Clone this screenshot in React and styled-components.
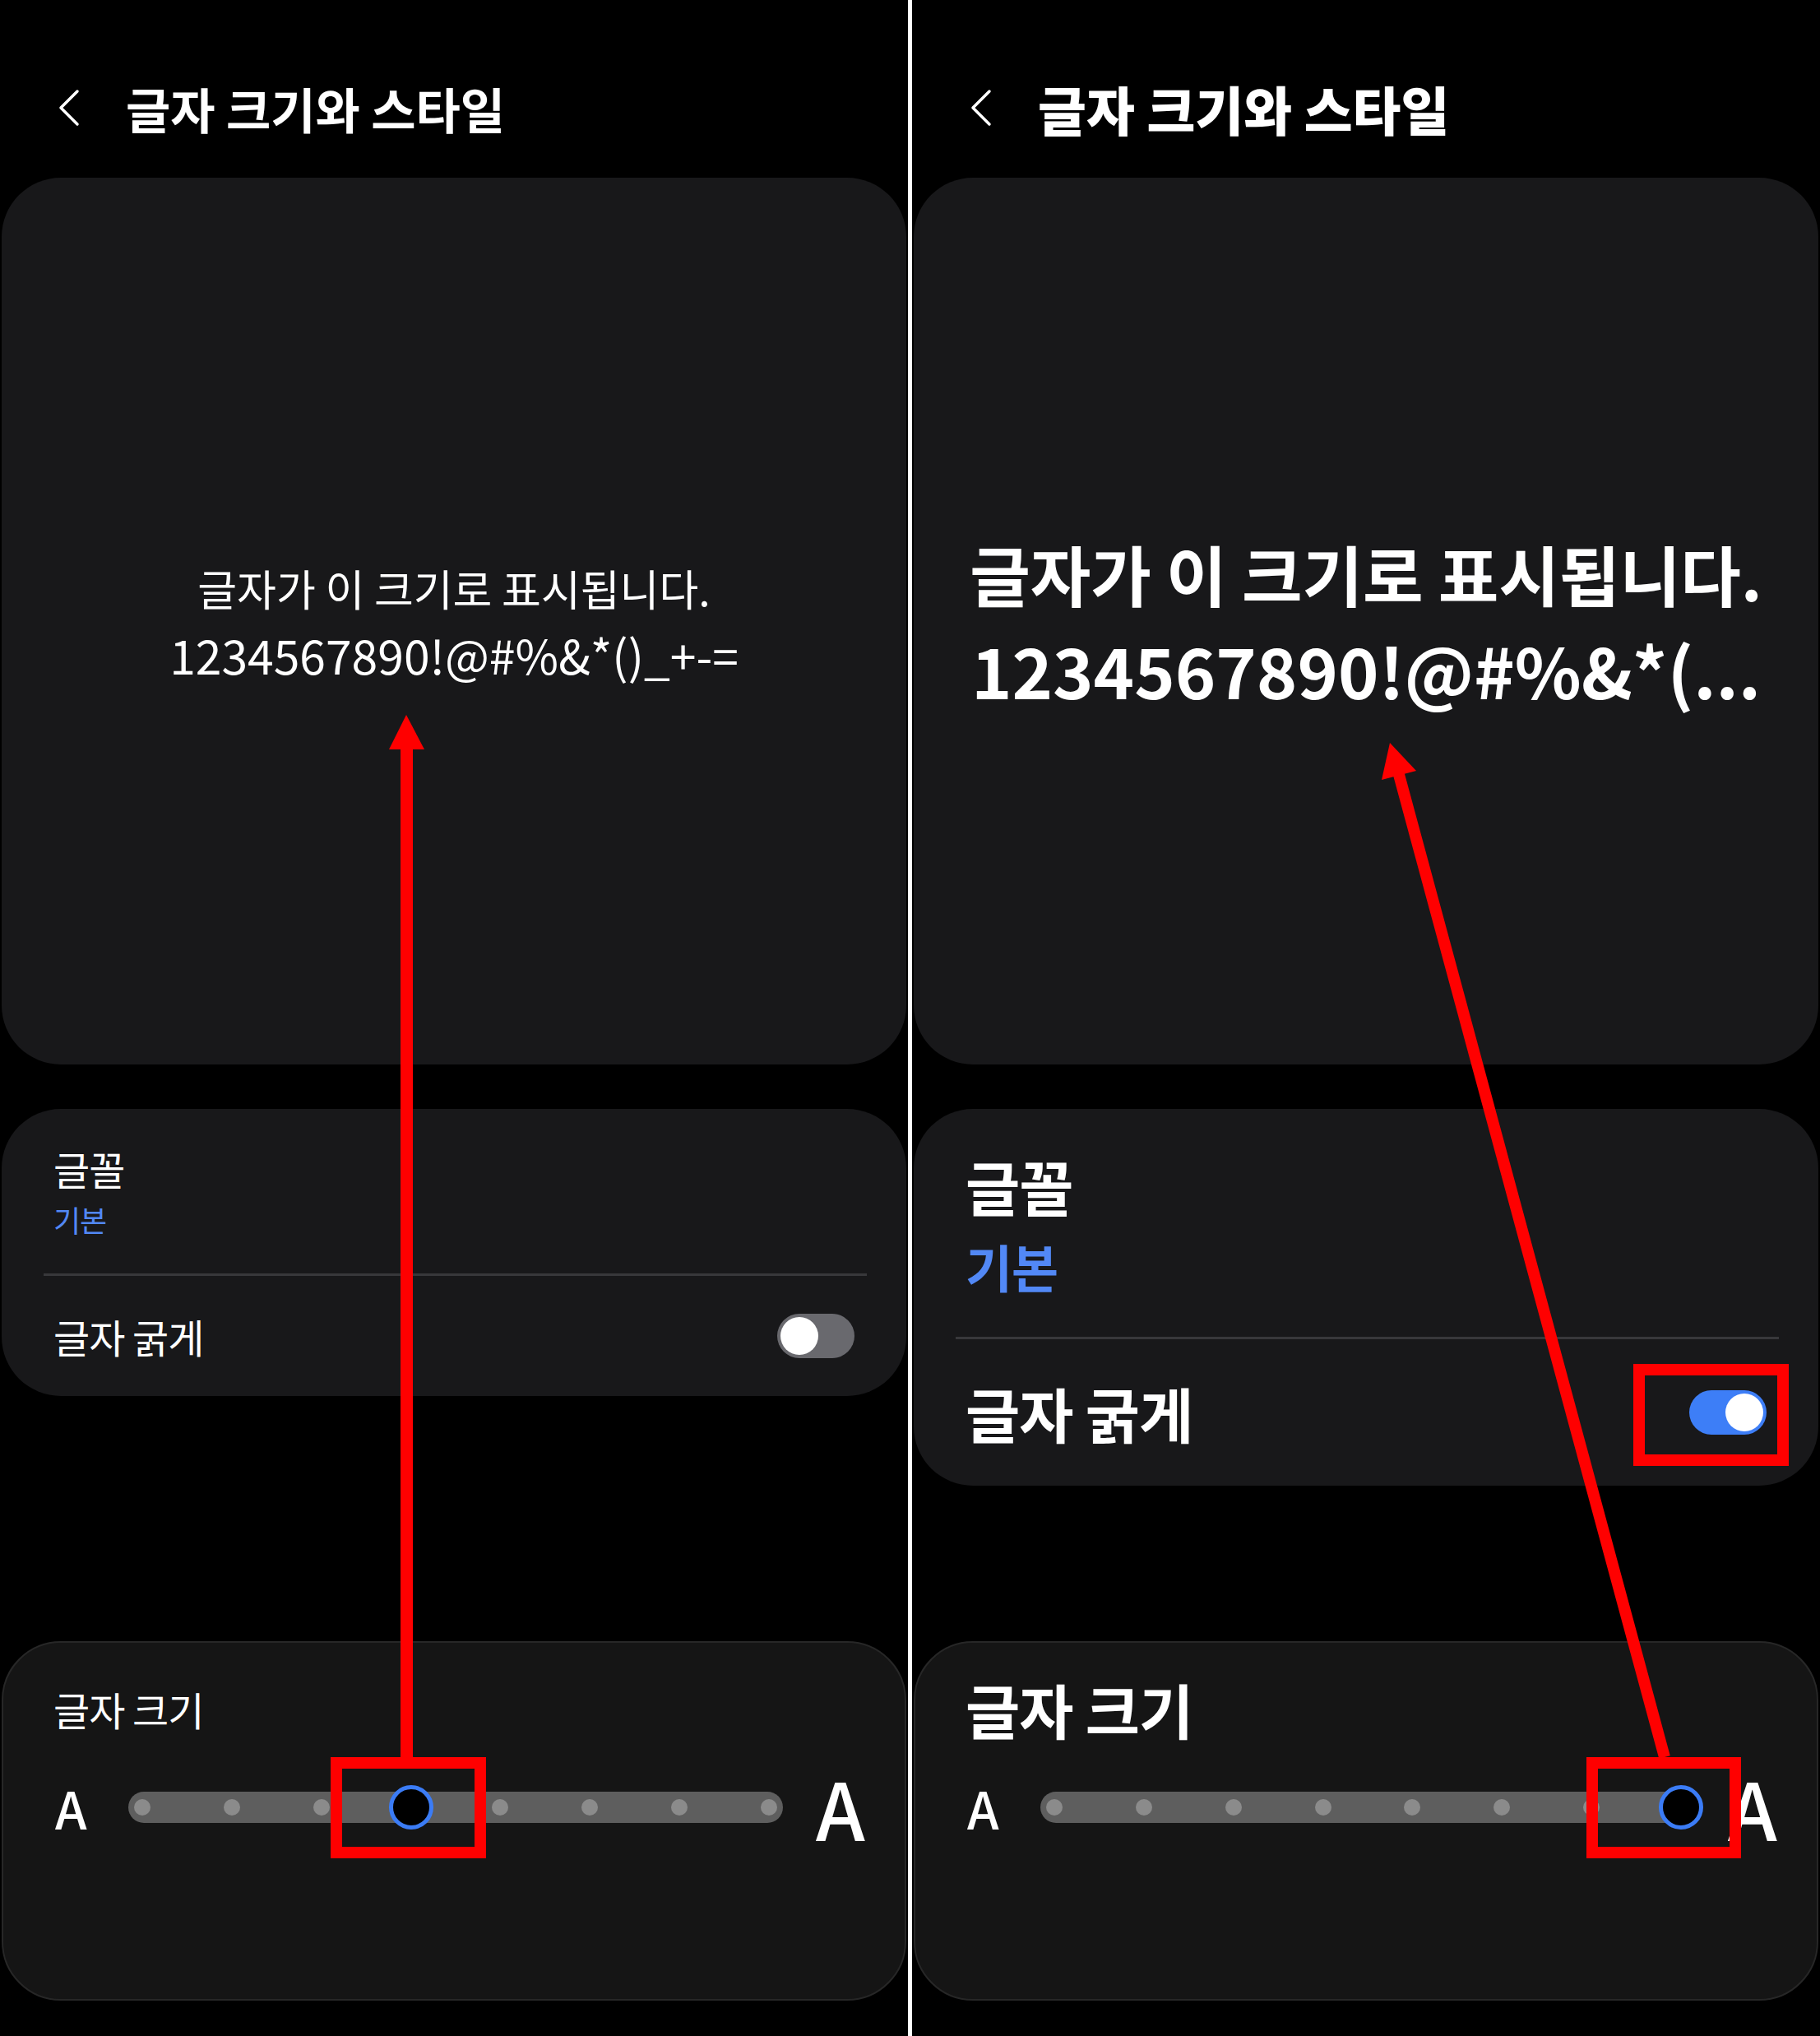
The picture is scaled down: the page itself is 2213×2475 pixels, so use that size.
import React from 'react';
import styled, { createGlobalStyle } from 'styled-components';

const GlobalStyle = createGlobalStyle`
  html, body {
    margin: 0;
    padding: 0;
    background: #000;
  }
  body {
    font-family: "Noto Sans CJK KR", "Noto Sans", sans-serif;
    color: #fff;
  }
`;

const normal = {
  titleSize: 59,
  titleWeight: 700,
  weight: 400,
  line1: 52,
  line2: 57,
  lineHeight: 80,
  spacing: 0,
  label: 48,
  labelLH: 62,
  sub: 36,
  subLH: 52,
  subGap: 5,
  topRow: 200,
  bottomRow: 146,
  on: false,
  step: 3,
  sample: '1234567890!@#%&*()_+-=',
};

const large = {
  titleSize: 64,
  titleWeight: 900,
  weight: 700,
  line1: 80,
  line2: 84,
  lineHeight: 118,
  spacing: 0,
  label: 72,
  labelLH: 90,
  sub: 62,
  subLH: 76,
  subGap: 15,
  topRow: 277,
  bottomRow: 178,
  on: true,
  step: 7,
  sample: '1234567890!@#%&*(...',
};

const Screen = styled.div`
  position: relative;
  display: flex;
  width: 2213px;
  height: 2475px;
  background: #000;
  overflow: hidden;
`;

const Split = styled.div`
  flex: none;
  width: 5px;
  background: #fff;
`;

const Panel = styled.div`
  flex: none;
  width: 1104px;
  display: flex;
  flex-direction: column;
  padding: 0 2px 43px;
  box-sizing: border-box;
`;

const Header = styled.header`
  height: 216px;
  display: flex;
  align-items: center;
  gap: 54px;
  padding: 46px 0 0 67px;
  box-sizing: border-box;
`;

const Title = styled.h1`
  margin: 0;
  font-size: ${p => p.$size}px;
  font-weight: ${p => p.$weight};
  line-height: 1;
`;

const Card = styled.section`
  background: #18181a;
  border-radius: 72px;
`;

const Preview = styled(Card)`
  height: 1078px;
  display: flex;
  flex-direction: column;
  align-items: center;
  justify-content: center;
  padding: 0 40px;
  box-sizing: border-box;
`;

const PreviewLine = styled.div`
  max-width: 100%;
  font-size: ${p => p.$size}px;
  line-height: ${p => p.$lh}px;
  font-weight: ${p => p.$weight};
  letter-spacing: ${p => p.$spacing}px;
  white-space: nowrap;
`;

const Options = styled(Card)`
  margin-top: 54px;
  display: flex;
  flex-direction: column;
`;

const OptionRow = styled.div`
  height: ${p => p.$height}px;
  display: flex;
  align-items: center;
  justify-content: space-between;
  padding: 0 63px 0 63px;
`;

const OptionText = styled.div`
  display: flex;
  flex-direction: column;
  gap: ${p => p.$gap}px;
`;

const Label = styled.div`
  font-size: ${p => p.$size}px;
  line-height: ${p => p.$lh}px;
  font-weight: ${p => p.$weight};
  letter-spacing: -1px;
`;

const SubLabel = styled(Label)`
  color: #5288f5;
`;

const Rule = styled.div`
  height: 3px;
  margin: 0 48px 0 51px;
  background: #38383b;
`;

const Toggle = styled.div`
  width: 94px;
  height: 54px;
  border-radius: 27px;
  padding: 4px;
  box-sizing: border-box;
  display: flex;
  align-items: center;
  justify-content: ${p => (p.$on ? 'flex-end' : 'flex-start')};
  background: ${p => (p.$on ? '#3d7ef7' : '#69696e')};
`;

const Knob = styled.div`
  width: 46px;
  height: 46px;
  border-radius: 50%;
  background: #fff;
`;

const SizeCard = styled(Card)`
  margin-top: auto;
  height: 437px;
  background: #151515;
  border: 2px solid #272727;
  padding-top: 35px;
  box-sizing: border-box;
`;

const SizeHead = styled.div`
  height: 90px;
  display: flex;
  align-items: center;
  padding-left: 61px;
`;

const SliderRow = styled.div`
  margin-top: 30px;
  height: 90px;
  display: flex;
  align-items: center;
  padding: 0 48px 0 63px;
`;

const Glyph = styled.span`
  flex: none;
  width: ${p => p.$w}px;
  font-size: ${p => p.$size}px;
  font-weight: 500;
  line-height: 1;
`;

const Track = styled.div`
  flex: 1;
  height: 38px;
  margin: 0 40px 0 49px;
  padding: 0 7px;
  border-radius: 19px;
  background: #5e5e5e;
  display: flex;
  align-items: center;
  justify-content: space-between;
`;

const Stop = styled.div`
  position: relative;
  flex: none;
  width: 20px;
  height: 20px;
  border-radius: 50%;
  background: ${p => (p.$hidden ? 'transparent' : '#8b8b8b')};
`;

const Thumb = styled.div`
  position: absolute;
  left: 50%;
  top: 50%;
  width: 54px;
  height: 54px;
  transform: translate(-50%, -50%);
  border: 5px solid #3b7cf6;
  border-radius: 50%;
  background: #000;
  box-sizing: border-box;
`;

const Marks = styled.svg`
  position: absolute;
  left: 0;
  top: 0;
  pointer-events: none;
`;

const Chevron = () => (
  <svg width="30" height="46" viewBox="0 0 30 46">
    <path d="M25 3 L5 23 L25 43" fill="none" stroke="#fff" strokeWidth="3.5" strokeLinecap="round" strokeLinejoin="round" />
  </svg>
);

const Phone = ({ c }) => (
  <Panel>
    <Header>
      <Chevron />
      <Title $size={c.titleSize} $weight={c.titleWeight}>글자 크기와 스타일</Title>
    </Header>

    <Preview>
      <PreviewLine $size={c.line1} $lh={c.lineHeight} $weight={c.weight} $spacing={c.spacing}>
        글자가 이 크기로 표시됩니다.
      </PreviewLine>
      <PreviewLine $size={c.line2} $lh={c.lineHeight} $weight={c.weight} $spacing={0}>
        {c.sample}
      </PreviewLine>
    </Preview>

    <Options>
      <OptionRow $height={c.topRow}>
        <OptionText $gap={c.subGap}>
          <Label $size={c.label} $lh={c.labelLH} $weight={c.weight}>글꼴</Label>
          <SubLabel $size={c.sub} $lh={c.subLH} $weight={c.weight}>기본</SubLabel>
        </OptionText>
      </OptionRow>
      <Rule />
      <OptionRow $height={c.bottomRow}>
        <Label $size={c.label} $lh={c.labelLH} $weight={c.weight}>글자 굵게</Label>
        <Toggle $on={c.on}>
          <Knob />
        </Toggle>
      </OptionRow>
    </Options>

    <SizeCard>
      <SizeHead>
        <Label $size={c.label} $lh={c.labelLH} $weight={c.weight}>글자 크기</Label>
      </SizeHead>
      <SliderRow>
        <Glyph $w={40} $size={62}>A</Glyph>
        <Track>
          {Array.from({ length: 8 }, (_, i) => (
            <Stop key={i} $hidden={i === c.step}>
              {i === c.step && <Thumb />}
            </Stop>
          ))}
        </Track>
        <Glyph $w={60} $size={96}>A</Glyph>
      </SliderRow>
    </SizeCard>
  </Panel>
);

const Annotations = () => (
  <Marks width="2213" height="2475" viewBox="0 0 2213 2475">
    <g fill="none" stroke="#ff0000" strokeWidth="14">
      <rect x="409" y="2143" width="175" height="109" />
      <rect x="1936" y="2143" width="174" height="109" />
      <rect x="1993" y="1665" width="175" height="110" />
    </g>
    <line x1="494.5" y1="905" x2="494.5" y2="2137" stroke="#ff0000" strokeWidth="15" />
    <polygon points="494,869 473,911 516,911" fill="#ff0000" />
    <line x1="1700" y1="938" x2="2024" y2="2136" stroke="#ff0000" strokeWidth="14" />
    <polygon points="1690,903 1680,948 1722,937" fill="#ff0000" />
  </Marks>
);

const App = () => (
  <>
    <GlobalStyle />
    <Screen>
      <Phone c={normal} />
      <Split />
      <Phone c={large} />
      <Annotations />
    </Screen>
  </>
);

export default App;
